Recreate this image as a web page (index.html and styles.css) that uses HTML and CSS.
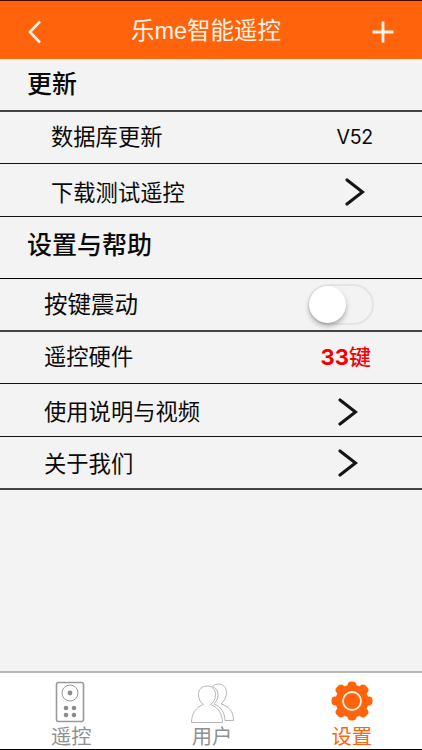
FILE: index.html
```html
<!DOCTYPE html>
<html lang="zh-CN">
<head>
    <meta charset="UTF-8">
    <meta name="viewport" content="width=device-width, initial-scale=1.0">
    <title>乐me智能遥控</title>
    <link rel="stylesheet" href="styles.css">
</head>
<body>
    <div class="app">
        <header class="header">
            <svg class="header__back" width="16" height="26" viewBox="0 0 16 26">
                <path d="M13 2.5 L3 13 L13 23.5" />
            </svg>
            <h1 class="header__title">乐me智能遥控</h1>
            <svg class="header__add" width="22" height="22" viewBox="0 0 22 22">
                <path d="M0.5 11 H21.5 M11 0.5 V21.5" />
            </svg>
        </header>

        <main class="list">
            <h2 class="list__title">更新</h2>
            <div class="row row--sub">
                <span>数据库更新</span>
                <span class="row__version">V52</span>
            </div>
            <div class="row row--sub row--download">
                <span>下载测试遥控</span>
                <svg class="row__arrow" width="20" height="28" viewBox="0 0 20 28">
                    <path d="M2 2 L17.5 14 L2 26" />
                </svg>
            </div>

            <h2 class="list__title list__title--help">设置与帮助</h2>
            <div class="row row--vibrate">
                <span>按键震动</span>
                <div class="switch"><div class="switch__knob"></div></div>
            </div>
            <div class="row row--hardware">
                <span>遥控硬件</span>
                <span class="row__keys"><b>33</b>键</span>
            </div>
            <div class="row row--video">
                <span>使用说明与视频</span>
                <svg class="row__arrow" width="20" height="28" viewBox="0 0 20 28">
                    <path d="M2 2 L17.5 14 L2 26" />
                </svg>
            </div>
            <div class="row row--about">
                <span>关于我们</span>
                <svg class="row__arrow" width="20" height="28" viewBox="0 0 20 28">
                    <path d="M2 2 L17.5 14 L2 26" />
                </svg>
            </div>
        </main>

        <nav class="tabs">
            <div class="tab">
                <svg class="tab__remote" width="44" height="44" viewBox="0 0 44 44">
                    <rect x="7.5" y="2.5" width="27" height="39" rx="2" stroke-width="1.6" />
                    <circle cx="21" cy="13" r="8" stroke-width="1" />
                    <g class="tab__dots">
                        <circle cx="21" cy="13" r="2.4" />
                        <circle cx="17" cy="28" r="2.3" />
                        <circle cx="25" cy="28" r="2.3" />
                        <circle cx="17" cy="35" r="2.3" />
                        <circle cx="25" cy="35" r="2.3" />
                    </g>
                </svg>
                <span>遥控</span>
            </div>
            <div class="tab">
                <svg class="tab__users" width="44" height="44" viewBox="0 0 44 44">
                    <path d="M13.5 24.5 C10 22 8.5 18.5 8.5 14.5 C8.5 9.5 12 6 17 6 C22 6 25.5 9.5 25.5 14.5 C25.5 18.5 24 22 20.5 24.5 C28 27 32.5 34 32.5 42.5 H1.5 C1.5 34 6 27 13.5 24.5 Z" />
                    <path d="M22.5 6.5 C24 4.7 26.5 4 28.5 4 C33.5 4 36.5 8 36.5 12.5 C36.5 17 34.5 20.5 31 24 C38.5 26 43.5 31 43.5 40.5 H35 C34.5 32 31 26.5 24 24 C26.5 21.5 28 18 28 14.5 C28 11 26 8 22.5 6.5 Z" />
                </svg>
                <span>用户</span>
            </div>
            <div class="tab tab--active">
                <svg class="tab__gear" width="44" height="44" viewBox="0 0 44 44">
                    <g transform="translate(22 21)">
                        <circle r="16.5" />
                        <rect x="-4.5" y="-19.5" width="9" height="39" rx="4" />
                        <rect x="-20.5" y="-4.5" width="41" height="9" rx="4" />
                        <rect x="-5" y="-20.5" width="10" height="41" rx="4" transform="rotate(45)" />
                        <rect x="-5" y="-20.5" width="10" height="41" rx="4" transform="rotate(-45)" />
                        <circle class="tab__ring" r="9" />
                    </g>
                </svg>
                <span>设置</span>
            </div>
        </nav>
    </div>
</body>
</html>
```

FILE: styles.css
```css
* {
    box-sizing: border-box;
}

body {
    margin: 0;
    font-family: "Liberation Sans", "Noto Sans CJK SC", sans-serif;
    background-color: #f3f3f3;
    color: #0a0a0a;
}

svg {
    display: block;
    fill: none;
}

.app {
    display: flex;
    flex-direction: column;
    height: 750px;
    border-top: 1px solid #4a0800;
    border-bottom: 1px solid #000;
}

.header {
    display: flex;
    justify-content: space-between;
    align-items: center;
    height: 58px;
    padding: 3px 28px 0 27px;
    background-color: #ff640d;
    color: #fff3e6;
}

.header__back {
    stroke: #fff3e6;
    stroke-width: 2.6;
}

.header__add {
    stroke: #fff3e6;
    stroke-width: 2.8;
}

.header__title {
    margin: 0 3px 1px 0;
    font-size: 23.5px;
    line-height: 30px;
    font-weight: 400;
}

.list {
    flex: 1;
}

.list__title {
    height: 53px;
    margin: 0;
    padding: 7px 0 0 27px;
    border-bottom: 2px solid #444;
    font-size: 25px;
    line-height: 36px;
    font-weight: 500;
}

.list__title--help {
    height: 62px;
    padding-top: 10px;
    border-bottom: 1px solid #000;
}

.row {
    display: flex;
    justify-content: space-between;
    align-items: center;
    height: 53px;
    padding: 0 51px 0 44px;
    border-bottom: 1px solid #111;
    font-size: 22.3px;
    line-height: 32px;
}

.row--sub {
    height: 52px;
    padding: 1px 49px 0 51px;
}

.row--download {
    height: 53px;
    padding: 4px 57px 0 51px;
}

.row--download > span,
.row--video > span,
.row--about > span {
    padding-top: 3px;
}

.row--vibrate {
    padding-right: 48px;
    border-bottom: 2px solid #444;
    font-size: 23.5px;
}

.row--hardware {
    height: 52px;
}

.row--video,
.row--about {
    padding-top: 3px;
    padding-right: 64px;
}

.row--about {
    padding-top: 1px;
    border-bottom: 2px solid #444;
}

.row__arrow {
    stroke: #151515;
    stroke-width: 3.1;
    stroke-linecap: round;
}

.row__version {
    padding-bottom: 2px;
    font-family: Inter, sans-serif;
    font-size: 19.5px;
    letter-spacing: -0.2px;
}

.row__keys {
    padding-bottom: 2px;
    font-family: Inter, "Noto Sans CJK SC", sans-serif;
    font-size: 22px;
    font-weight: 500;
    color: #f40000;
}

.row__keys b {
    font-weight: 700;
}

.switch {
    width: 66px;
    height: 41px;
    padding: 1px;
    border: 2px solid #e4e4e4;
    border-radius: 21px;
}

.switch__knob {
    width: 37px;
    height: 37px;
    margin: -1px 0 0 -2px;
    border-radius: 50%;
    background-color: #fff;
    box-shadow: 0 3px 5px rgba(0, 0, 0, 0.3);
}

.tabs {
    display: grid;
    grid-template-columns: repeat(3, 1fr);
    height: 78px;
    border-top: 2px solid #b8b8b8;
    background-color: #fff;
}

.tab {
    display: flex;
    flex-direction: column;
    align-items: center;
    padding: 7px 0 0 2px;
    font-size: 20.3px;
    line-height: 27px;
    font-weight: 400;
    color: #909090;
}

.tab--active {
    padding-left: 0;
    color: #ff640d;
}

.tab__remote {
    stroke: #999;
}

.tab__dots {
    fill: #8c8c8c;
    stroke: none;
}

.tab__users {
    stroke: #b5b5b5;
    stroke-width: 1;
}

.tab__gear {
    fill: #ff640d;
}

.tab__ring {
    stroke: #fff3e6;
    stroke-width: 1.8;
}
```
